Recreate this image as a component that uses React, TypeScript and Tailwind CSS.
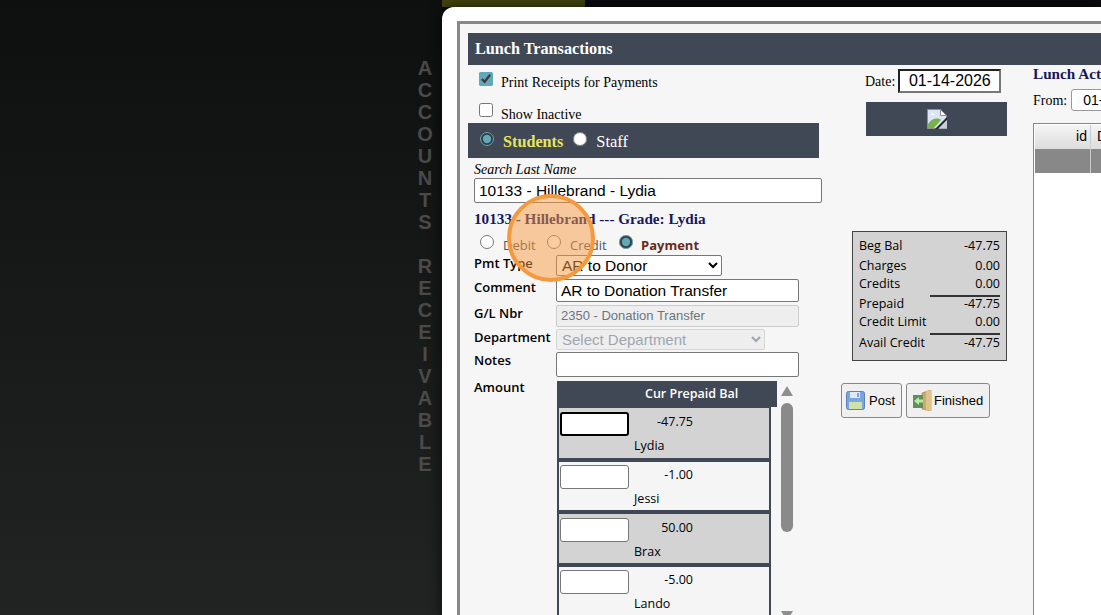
const letters = "ACCOUNTS RECEIVABLE".split("");

const balances = [
  { label: "Beg Bal", value: "-47.75", h: "h-[20px]" },
  { label: "Charges", value: "0.00", h: "h-[18px]" },
  { label: "Credits", value: "0.00", h: "h-[20px]", rule: true },
  { label: "Prepaid", value: "-47.75", h: "h-[18px]" },
  { label: "Credit Limit", value: "0.00", h: "h-[21px]", rule: true },
  { label: "Avail Credit", value: "-47.75", h: "h-[18px]" },
];

const people = [
  { name: "Lydia", bal: "-47.75", shade: true, focus: true, h: "h-[50px] pt-[4px]" },
  { name: "Jessi", bal: "-1.00", shade: false, h: "h-[48px] pt-[3px]" },
  { name: "Brax", bal: "50.00", shade: true, h: "h-[49px] pt-[4px]" },
  { name: "Lando", bal: "-5.00", shade: false, h: "h-[49px] pt-[3px]" },
];

function BrokenImage() {
  return (
    <svg width="20" height="20" viewBox="0 0 20 20">
      <path d="M0.5 0.5h13l6 6v13H0.5z" fill="#d9e4f4" stroke="#8e8e8e" />
      <path d="M13.5 0.5v6h6z" fill="#ffffff" stroke="#8e8e8e" />
      <path d="M3 6c1-2 4-2 5 0z" fill="#ffffff" />
      <path d="M1 19v-4c3-5 9-7 13-4l-7 8z" fill="#7ab04c" />
      <path d="M20 8L8 20h3l9-9z" fill="#23272e" />
      <path d="M20 11v8.500h-8z" fill="#c9ccd2" />
    </svg>
  );
}

function Floppy() {
  return (
    <svg width="19" height="19" viewBox="0 0 19 19">
      <rect x="0.5" y="0.5" width="18" height="18" rx="2" fill="#7aa6e0" stroke="#5b82bc" />
      <rect x="4" y="1" width="10" height="6" fill="#dfe9f7" />
      <rect x="11" y="2" width="2" height="4" fill="#7aa6e0" />
      <rect x="3" y="11" width="13" height="7" fill="#cfe0a8" />
    </svg>
  );
}

function ExitDoor() {
  return (
    <svg width="20" height="21" viewBox="0 0 20 21">
      <path d="M10 3l9-3v21l-9-2z" fill="#cfa968" stroke="#9a7c44" strokeWidth="0.6" />
      <path d="M14 1.500l5-1.500v21l-5-1z" fill="#e0c48c" />
      <rect x="1" y="5" width="10" height="13" fill="#5f8f5a" />
      <path d="M2 11l5-4v2.500h4v3H7V15z" fill="#bfe6a8" />
    </svg>
  );
}

export default function App() {
  return (
    <div className="relative flex h-[615px] w-[1101px] overflow-hidden bg-[#0b0b10] font-['Liberation_Serif',serif]">
      {/* side label */}
      <div className="flex w-[442px] shrink-0 flex-col items-end bg-gradient-to-b from-[#0e0f0f] to-[#222323] pr-[7px] pt-[57px]">
        {letters.map((ch, i) => (
          <div
            key={i}
            className="flex h-[22px] w-[20px] items-center justify-center font-['Liberation_Sans',sans-serif] text-[20px] font-bold text-[#4a4a4a]"
          >
            {ch}
          </div>
        ))}
      </div>

      <div className="relative flex min-w-0 flex-1 flex-col">
        <div className="h-[7px] w-[143px] shrink-0 bg-[#45450f]" />

        {/* modal */}
        <div className="flex-1 rounded-tl-[12px] bg-white pl-[15px] pt-[14px] shadow-[0_0_14px_rgba(0,0,0,0.7)]">
          <div className="h-[600px] border-l-[3px] border-t-[3px] border-[#888888] bg-[#f6f6f6] pl-[8px] pt-[9px]">
            <div className="flex h-[32px] items-center bg-[#414855] pl-[7px] text-[16.2px] font-bold text-white">
              Lunch Transactions
            </div>

            <div className="flex">
              {/* left column */}
              <div className="w-[351px] shrink-0">
                <div className="flex h-[32px] items-start pl-[11px] pt-[7px]">
                  <input type="checkbox" defaultChecked className="m-0 h-[14px] w-[14px] accent-[#5fa9bb]" />
                  <span className="ml-[8px] text-[14px] text-black">Print Receipts for Payments</span>
                </div>
                <div className="flex h-[26px] items-start pl-[11px] pt-[6px]">
                  <input type="checkbox" className="m-0 h-[14px] w-[14px]" />
                  <span className="ml-[8px] mt-[1px] text-[14px] text-black">Show Inactive</span>
                </div>

                <div className="flex h-[35px] items-start bg-[#414855] pl-[12px] pt-[9px]">
                  <input type="radio" name="who" defaultChecked className="m-0 h-[14px] w-[14px] accent-[#5fa9bb]" />
                  <span className="ml-[9px] mt-[-2px] text-[16.2px] font-bold text-[#e6e65c]">Students</span>
                  <input type="radio" name="who" className="m-0 ml-[10px] h-[14px] w-[14px]" />
                  <span className="ml-[9px] mt-[-2px] text-[16.5px] text-white">Staff</span>
                </div>

                <div className="pl-[6px]">
                  <div className="mt-[3px] h-[17px] text-[14px] italic leading-[17px] text-black">Search Last Name</div>
                  <input
                    readOnly
                    value="10133 - Hillebrand - Lydia"
                    className="h-[25px] w-[348px] rounded-[2px] border border-[#777777] bg-white px-[4px] font-['Liberation_Sans',sans-serif] text-[15.5px] text-black"
                  />
                  <div className="mt-[7px] h-[18px] text-[15.2px] font-bold leading-[18px] text-[#17175c]">
                    10133 - Hillebrand --- Grade: Lydia
                  </div>

                  <div className="flex h-[30px] items-start pl-[6px] pt-[7px] font-['Open_Sans',sans-serif] text-[13px]">
                    <input type="radio" name="kind" className="m-0 h-[14px] w-[14px]" />
                    <span className="ml-[9px] mt-[1px] w-[44px] text-[#555555]">Debit</span>
                    <input type="radio" name="kind" className="m-0 h-[14px] w-[14px]" />
                    <span className="ml-[9px] mt-[1px] w-[49px] text-[#555555]">Credit</span>
                    <input type="radio" name="kind" defaultChecked className="m-0 h-[14px] w-[14px] accent-[#5fa9bb]" />
                    <span className="ml-[8px] mt-[1px] font-bold text-[#6b2a1a]">Payment</span>
                  </div>

                  <div className="font-['Open_Sans',sans-serif] text-[13px] font-semibold text-black">
                    <div className="mt-[-3px] flex h-[24px] items-start">
                      <span className="mt-[-1px] w-[82px]">Pmt Type</span>
                      <select className="h-[21px] w-[166px] rounded-[2px] border border-[#777777] bg-white pl-[1px] font-['Liberation_Sans',sans-serif] text-[15.5px] font-normal leading-[18px] text-black">
                        <option>AR to Donor</option>
                      </select>
                    </div>
                    <div className="flex h-[26px] items-start">
                      <span className="mt-[-1px] w-[82px]">Comment</span>
                      <input
                        readOnly
                        value="AR to Donation Transfer"
                        className="h-[23px] w-[243px] rounded-[2px] border border-[#777777] bg-white px-[4px] font-['Liberation_Sans',sans-serif] text-[15.5px] font-normal text-black"
                      />
                    </div>
                    <div className="flex h-[24px] items-start">
                      <span className="mt-[-1px] w-[82px]">G/L Nbr</span>
                      <input
                        disabled
                        value="2350 - Donation Transfer"
                        className="h-[22px] w-[243px] rounded-[2px] border border-[#cccccc] bg-[#eeeeee] px-[4px] pb-[2px] font-['Liberation_Sans',sans-serif] text-[13px] font-normal text-[#6c757d]"
                      />
                    </div>
                    <div className="flex h-[23px] items-start">
                      <span className="mt-[-1px] w-[82px]">Department</span>
                      <select
                        disabled
                        className="h-[21px] w-[209px] rounded-[2px] border border-[#d5d5d5] bg-[#eeeeee] pl-[1px] font-['Liberation_Sans',sans-serif] text-[15px] font-normal text-[#a0a6ae]"
                      >
                        <option>Select Department</option>
                      </select>
                    </div>
                    <div className="flex h-[29px] items-start">
                      <span className="mt-[-1px] w-[82px]">Notes</span>
                      <input readOnly className="h-[25px] w-[243px] rounded-[2px] border border-[#777777] bg-white" />
                    </div>

                    <div className="flex items-start">
                      <span className="mt-[-3px] w-[83px]">Amount</span>
                      <div className="flex">
                        <div className="w-[220px]">
                          <div className="flex h-[26px] items-center bg-[#414855] pl-[88px] text-[12.5px] font-semibold text-white">
                            Cur Prepaid Bal
                          </div>
                          <div className="flex w-[214px] flex-col gap-[4px] bg-[#414855] px-[2px] pt-[1px] font-normal">
                            {people.map((p) => (
                              <div
                                key={p.name}
                                className={`${p.h} pl-[1px] text-[12.5px] leading-[17px] text-black ${p.shade ? "bg-[#d3d3d3]" : "bg-[#f5f5f5]"}`}
                              >
                                <div className="flex items-start">
                                  <input
                                    readOnly
                                    className={`h-[24px] w-[69px] rounded-[3px] bg-white ${p.focus ? "border-2 border-black" : "border border-[#777777]"}`}
                                  />
                                  <span className="flex-1 pr-[76px] pt-[1px] text-right">{p.bal}</span>
                                </div>
                                <div className="pl-[74px] pt-[1px]">{p.name}</div>
                              </div>
                            ))}
                          </div>
                        </div>
                        {/* scrollbar */}
                        <div className="ml-[4px] flex w-[12px] flex-col items-center">
                          <div className="mt-[5px] h-0 w-0 border-x-[6px] border-b-[10px] border-x-transparent border-b-[#8f8f8f]" />
                          <div className="mt-[7px] h-[129px] w-[12px] rounded-[6px] bg-[#8a8a8a]" />
                          <div className="mt-[79px] h-0 w-0 border-x-[6px] border-t-[10px] border-x-transparent border-t-[#8f8f8f]" />
                        </div>
                      </div>
                    </div>
                  </div>
                </div>
              </div>

              {/* middle column */}
              <div className="w-[214px] shrink-0">
                <div className="flex h-[37px] items-start justify-start pl-[46px] pt-[4px]">
                  <span className="mt-[2px] text-[14px] text-black">Date:</span>
                  <input
                    readOnly
                    value="01-14-2026"
                    className="ml-[3px] h-[24px] w-[103px] border-2 border-b-[#777777] border-l-[#222222] border-r-[#777777] border-t-[#222222] bg-white text-center font-['Liberation_Sans',sans-serif] text-[16px] text-black"
                  />
                </div>
                <div className="ml-[47px] flex h-[34px] w-[141px] items-center justify-center bg-[#414855]">
                  <BrokenImage />
                </div>

                <div className="ml-[33px] mt-[95px] h-[130px] w-[155px] border border-[#444444] bg-[#d3d3d3] px-[6px] pt-[5px] font-['Open_Sans',sans-serif] text-[12.5px] leading-[18px] text-black">
                  {balances.map((b) => (
                    <div key={b.label} className={`flex items-start justify-between ${b.h}`}>
                      <span>{b.label}</span>
                      <span className={`w-[70px] text-right ${b.rule ? "h-[22px] shrink-0 border-b-2 border-[#333333]" : ""}`}>{b.value}</span>
                    </div>
                  ))}
                </div>

                <div className="ml-[22px] mt-[22px] flex gap-[4px] font-['Liberation_Sans',sans-serif] text-[13px] text-black">
                  <button className="flex h-[35px] w-[61px] items-center gap-[4px] rounded-[3px] border border-[#888888] bg-[#f0f0f0] pl-[4px]">
                    <Floppy />
                    Post
                  </button>
                  <button className="flex h-[35px] w-[84px] items-center gap-[2px] rounded-[3px] border border-[#888888] bg-[#f0f0f0] pl-[5px]">
                    <ExitDoor />
                    Finished
                  </button>
                </div>
              </div>

              {/* right column */}
              <div className="min-w-0 flex-1 overflow-hidden">
                <div className="whitespace-nowrap text-[15.2px] font-bold leading-[18px] text-[#17175c]">Lunch Activity</div>
                <div className="mt-[6px] flex h-[22px] items-center whitespace-nowrap text-[14px] text-black">
                  From:
                  <input
                    readOnly
                    value="01-01-2026"
                    className="ml-[4px] h-[22px] w-[100px] shrink-0 rounded-[3px] border border-[#999999] bg-white pl-[11px] font-['Liberation_Sans',sans-serif] text-[14px]"
                  />
                </div>
                <div className="mt-[12px] h-[500px] border-l border-t border-[#888888] bg-white pl-[1px] pt-[1px]">
                  <div className="flex h-[24px] bg-gradient-to-b from-[#f4f4f4] to-[#dddddd] font-['Liberation_Sans',sans-serif] text-[14px] leading-[23px] text-black">
                    <div className="w-[56px] shrink-0 border-r border-[#cccccc] pr-[3px] text-right">id</div>
                    <div className="pl-[6px]">D</div>
                  </div>
                  <div className="flex h-[24px] bg-[#888888]">
                    <div className="w-[56px] shrink-0 border-r border-[#cccccc]" />
                  </div>
                </div>
              </div>
            </div>
          </div>
        </div>
      </div>

      {/* click marker */}
      <div className="pointer-events-none absolute left-[507px] top-[194px] h-[88px] w-[88px] rounded-full border-[4px] border-[#f5993f] bg-[#f5993f]/50" />
    </div>
  );
}
